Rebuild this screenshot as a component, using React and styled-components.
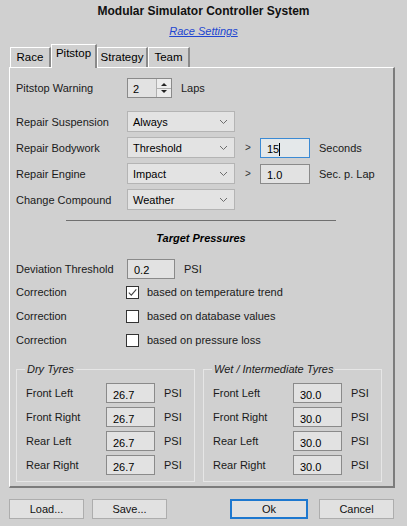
import React from 'react'
import styled, { createGlobalStyle } from 'styled-components'

const GlobalStyle = createGlobalStyle`
  html, body {
    margin: 0;
    padding: 0;
    background: #d0d0d0;
  }
  body {
    font-family: "Liberation Sans", Arial, sans-serif;
    font-size: 11px;
    color: #000;
  }
`

export default function App() {
  return (
    <>
      <GlobalStyle />
      <Window>
        <Title>Modular Simulator Controller System</Title>
        <LinkLine><a>Race Settings</a></LinkLine>

        <TabStrip>
          <Tab $w={41}>Race</Tab>
          <Tab $w={46} $active>Pitstop</Tab>
          <Tab $w={51}>Strategy</Tab>
          <Tab $w={42}>Team</Tab>
        </TabStrip>

        <Panel>
          <Row $h={20}>
            <Label>Pitstop Warning</Label>
            <Spinner>
              <span>2</span>
              <SpinButtons>
                <SpinBtn><Arrow $up /></SpinBtn>
                <SpinBtn><Arrow /></SpinBtn>
              </SpinButtons>
            </Spinner>
            <Unit>Laps</Unit>
          </Row>

          <Row $top={13}>
            <Label>Repair Suspension</Label>
            <Dropdown value="Always" />
          </Row>
          <Row $top={5}>
            <Label>Repair Bodywork</Label>
            <Dropdown value="Threshold" />
            <Gt>&gt;</Gt>
            <Input $w={50} $focus>15<Caret /></Input>
            <Unit>Seconds</Unit>
          </Row>
          <Row $top={5}>
            <Label>Repair Engine</Label>
            <Dropdown value="Impact" />
            <Gt>&gt;</Gt>
            <Input $w={50}>1.0</Input>
            <Unit>Sec. p. Lap</Unit>
          </Row>
          <Row $top={5}>
            <Label>Change Compound</Label>
            <Dropdown value="Weather" />
          </Row>

          <Separator />
          <Section>Target Pressures</Section>

          <Row $top={14} $h={19}>
            <Label>Deviation Threshold</Label>
            <Input $w={48}>0.2</Input>
            <Unit>PSI</Unit>
          </Row>
          <CheckRow $top={5} label="Correction" text="based on temperature trend" checked />
          <CheckRow $top={6} label="Correction" text="based on database values" />
          <CheckRow $top={6} label="Correction" text="based on pressure loss" />

          <Groups>
            <TyreGroup title="Dry Tyres" value="26.7" />
            <TyreGroup title="Wet / Intermediate Tyres" value="30.0" />
          </Groups>
        </Panel>

        <Footer>
          <Button>Load...</Button>
          <Button>Save...</Button>
          <Spacer />
          <Button $primary>Ok</Button>
          <Button>Cancel</Button>
        </Footer>
      </Window>
    </>
  )
}

function Dropdown({ value }) {
  return (
    <Select>
      <span>{value}</span>
      <svg width="9" height="6" viewBox="0 0 9 6">
        <path d="M1 1 L4.5 4.5 L8 1" fill="none" stroke="#6d6d6d" strokeWidth="1" />
      </svg>
    </Select>
  )
}

function CheckRow({ $top, label, text, checked }) {
  return (
    <Row $top={$top} $h={18}>
      <Label>{label}</Label>
      <Check>
        {checked && (
          <svg width="11" height="11" viewBox="0 0 11 11">
            <path d="M1.8 5.6 L4.3 8.1 L9.3 2.4" fill="none" stroke="#444" strokeWidth="1.1" />
          </svg>
        )}
      </Check>
      <CheckText>{text}</CheckText>
    </Row>
  )
}

function TyreGroup({ title, value }) {
  const wheels = ['Front Left', 'Front Right', 'Rear Left', 'Rear Right']
  return (
    <Group>
      <legend>{title}</legend>
      {wheels.map((w) => (
        <GroupRow key={w}>
          <GroupLabel>{w}</GroupLabel>
          <Input $w={49}>{value}</Input>
          <Unit>PSI</Unit>
        </GroupRow>
      ))}
    </Group>
  )
}

const Window = styled.div`
  width: 407px;
  height: 526px;
  display: flex;
  flex-direction: column;
  overflow: hidden;
`

const Title = styled.div`
  margin-top: 4px;
  height: 15px;
  line-height: 15px;
  text-align: center;
  font-weight: bold;
  font-size: 12px;
  color: #111;
`

const LinkLine = styled.div`
  margin-top: 5px;
  height: 14px;
  line-height: 14px;
  text-align: center;
  a {
    color: #2145d1;
    font-style: italic;
    text-decoration: underline;
  }
`

const TabStrip = styled.div`
  margin-top: 6px;
  margin-left: 10px;
  display: flex;
  align-items: flex-end;
  height: 23px;
  position: relative;
  z-index: 1;
`

const Tab = styled.div`
  box-sizing: border-box;
  width: ${(p) => p.$w}px;
  height: ${(p) => (p.$active ? '24px' : '20px')};
  margin-bottom: ${(p) => (p.$active ? '-1px' : '0')};
  padding-top: ${(p) => (p.$active ? '2px' : '3px')};
  text-align: center;
  background: #d0d0d0;
  border-top: 1px solid #fff;
  border-left: 1px solid #fff;
  border-right: 2px solid #8a8a8a;
  font-size: 11.5px;
`

const Panel = styled.div`
  box-sizing: border-box;
  margin-left: 9px;
  width: 386px;
  height: 421px;
  border-top: 1px solid #fff;
  border-left: 1px solid #fff;
  border-right: 2px solid #7c7c7c;
  border-bottom: 2px solid #7c7c7c;
  padding: 10px 0 0 6px;
  display: flex;
  flex-direction: column;
`

const Row = styled.div`
  display: flex;
  align-items: center;
  flex: none;
  height: ${(p) => p.$h || 21}px;
  margin-top: ${(p) => p.$top || 0}px;
`

const Label = styled.div`
  width: 111px;
  flex: none;
  color: #1a1a1a;
`

const Unit = styled.div`
  margin-left: 9px;
  color: #1a1a1a;
`

const Gt = styled.div`
  width: 25px;
  padding-left: 10px;
  box-sizing: border-box;
  font-size: 10px;
  color: #333;
`

const Select = styled.div`
  box-sizing: border-box;
  width: 108px;
  height: 21px;
  background: #e3e3e3;
  border: 1px solid #b4b4b4;
  display: flex;
  align-items: center;
  justify-content: space-between;
  padding: 0 6px 0 5px;
`

const Input = styled.div`
  box-sizing: border-box;
  width: ${(p) => p.$w}px;
  height: 20px;
  padding: 3px 0 0 6px;
  background: ${(p) => (p.$focus ? '#e4e8ea' : '#e2e2e2')};
  border: 1px solid ${(p) => (p.$focus ? '#3b8ad4' : '#8a8a8a')};
  display: flex;
  align-items: center;
`

const Caret = styled.span`
  display: inline-block;
  width: 1px;
  height: 13px;
  background: #000;
`

const Spinner = styled.div`
  box-sizing: border-box;
  width: 45px;
  height: 20px;
  background: #e2e2e2;
  border: 1px solid #8a8a8a;
  display: flex;
  align-items: center;
  justify-content: space-between;
  padding-left: 5px;
  span {
    padding-top: 2px;
  }
`

const SpinButtons = styled.div`
  display: flex;
  flex-direction: column;
  height: 100%;
  width: 14px;
  border-left: 1px solid #b0b0b0;
`

const SpinBtn = styled.div`
  flex: 1;
  display: flex;
  align-items: center;
  justify-content: center;
  background: #ececec;
  & + & {
    border-top: 1px solid #b0b0b0;
  }
`

const Arrow = styled.span`
  width: 0;
  height: 0;
  border-left: 3px solid transparent;
  border-right: 3px solid transparent;
  ${(p) => (p.$up ? 'border-bottom: 3px solid #222;' : 'border-top: 3px solid #222;')}
`

const Check = styled.div`
  box-sizing: border-box;
  width: 13px;
  height: 13px;
  margin-left: -1px;
  background: #fff;
  border: 1px solid #333;
  display: flex;
  align-items: center;
  justify-content: center;
`

const CheckText = styled.div`
  margin-left: 8px;
  color: #1a1a1a;
`

const Separator = styled.div`
  flex: none;
  margin: 10px 0 0 50px;
  width: 270px;
  height: 1px;
  background: #6f6f6f;
`

const Section = styled.div`
  flex: none;
  margin-top: 10px;
  margin-left: -6px;
  text-align: center;
  font-weight: bold;
  font-style: italic;
  font-size: 11px;
  height: 14px;
  line-height: 14px;
  padding-right: 1px;
`

const Groups = styled.div`
  flex: none;
  display: flex;
  gap: 8px;
  margin-top: 14px;
`

const Group = styled.fieldset`
  box-sizing: border-box;
  margin: 0;
  width: 179px;
  height: 119px;
  padding: 8px 0 0 9px;
  border: 1px solid #e6e6e6;
  display: flex;
  flex-direction: column;
  gap: 4px;
  legend {
    font-style: italic;
    padding: 0 2px;
    margin-left: -1px;
    color: #1a1a1a;
  }
`

const GroupRow = styled.div`
  display: flex;
  align-items: center;
  height: 20px;
`

const GroupLabel = styled.div`
  width: 80px;
  flex: none;
  color: #1a1a1a;
`

const Footer = styled.div`
  display: flex;
  gap: 8px;
  margin: 11px 13px 0 9px;
`

const Spacer = styled.div`
  flex: 1;
`

const Button = styled.div`
  box-sizing: border-box;
  width: ${(p) => (p.$primary ? '78px' : '75px')};
  height: 20px;
  background: #e1e1e1;
  border: ${(p) => (p.$primary ? '2px solid #1e78cf' : '1px solid #adadad')};
  display: flex;
  align-items: center;
  justify-content: center;
  color: #111;
  margin-right: ${(p) => (p.$primary ? '3px' : '0')};
`
